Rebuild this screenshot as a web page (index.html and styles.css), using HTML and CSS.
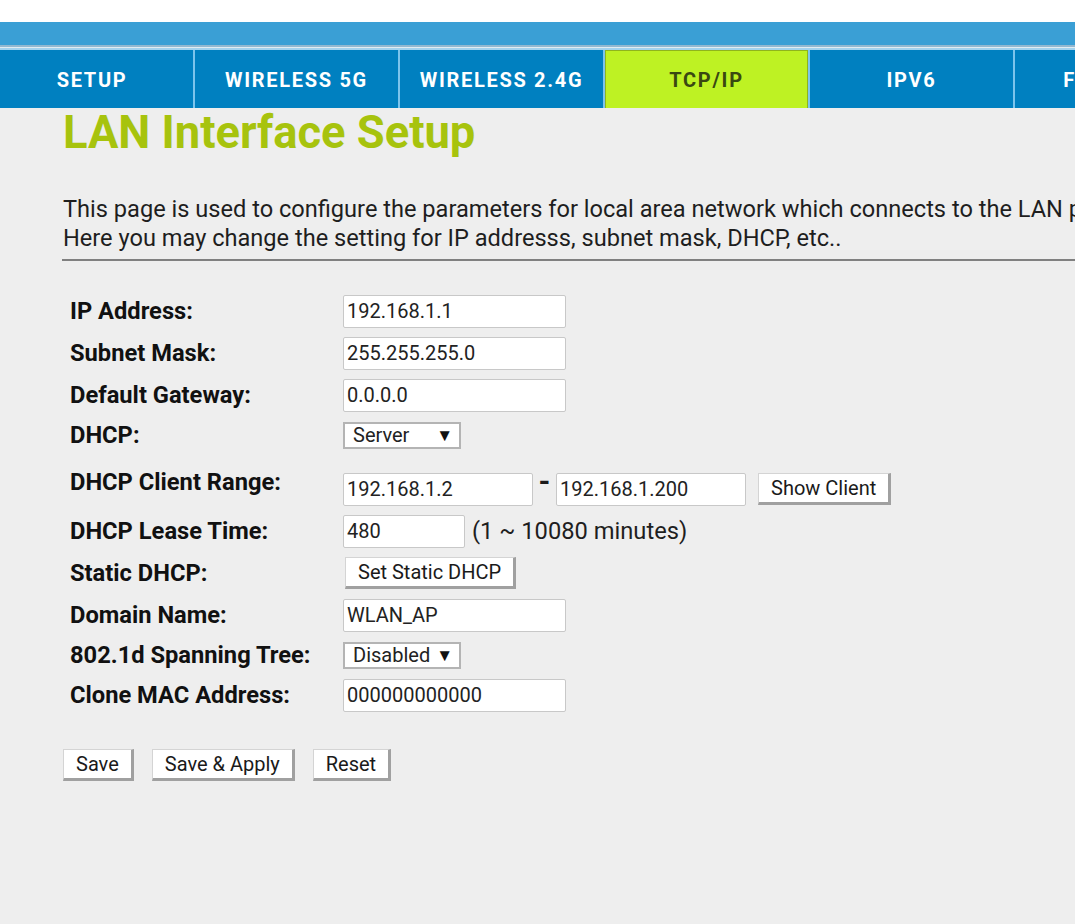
FILE: index.html
```html
<!DOCTYPE html>
<html lang="en">
<head>
    <meta charset="UTF-8">
    <meta name="viewport" content="width=device-width, initial-scale=1.0">
    <title>LAN Interface Setup</title>
    <link rel="stylesheet" href="styles.css">
</head>
<body>
    <!-- Header -->
    <div class="top-space"></div>
    <div class="top-bar"></div>
    <div class="top-stripe"></div>

    <!-- Main Menu -->
    <div class="menu">
        <div class="tab first">SETUP</div>
        <div class="tab">WIRELESS 5G</div>
        <div class="tab">WIRELESS 2.4G</div>
        <div class="tab active">TCP/IP</div>
        <div class="tab">IPV6</div>
        <div class="tab">FIREWALL</div>
    </div>

    <div class="content">
        <h1>LAN Interface Setup</h1>

        <p class="intro">This page is used to configure the parameters for local area network which connects to the LAN port of your Access Point.<br>Here you may change the setting for IP addresss, subnet mask, DHCP, etc..</p>
        <hr>

        <!-- LAN Settings -->
        <div class="form">
            <div class="row">
                <label>IP Address:</label>
                <input type="text" class="field" value="192.168.1.1">
            </div>
            <div class="row">
                <label>Subnet Mask:</label>
                <input type="text" class="field" value="255.255.255.0">
            </div>
            <div class="row">
                <label>Default Gateway:</label>
                <input type="text" class="field" value="0.0.0.0">
            </div>
            <div class="row short">
                <label>DHCP:</label>
                <span class="select">Server</span>
            </div>
            <div class="row range">
                <label>DHCP Client Range:</label>
                <div class="range-fields">
                    <input type="text" class="field mid" value="192.168.1.2">
                    <span class="dash">-</span>
                    <input type="text" class="field mid" value="192.168.1.200">
                    <button class="btn show-client">Show Client</button>
                </div>
            </div>
            <div class="row">
                <label>DHCP Lease Time:</label>
                <input type="text" class="field small" value="480">
                <span class="hint">(1 ~ 10080 minutes)</span>
            </div>
            <div class="row">
                <label>Static DHCP:</label>
                <button class="btn static">Set Static DHCP</button>
            </div>
            <div class="row">
                <label>Domain Name:</label>
                <input type="text" class="field" value="WLAN_AP">
            </div>
            <div class="row short">
                <label>802.1d Spanning Tree:</label>
                <span class="select">Disabled</span>
            </div>
            <div class="row">
                <label>Clone MAC Address:</label>
                <input type="text" class="field" value="000000000000">
            </div>
        </div>

        <!-- Button Group -->
        <div class="btn-group">
            <button class="btn">Save</button>
            <button class="btn">Save &amp; Apply</button>
            <button class="btn">Reset</button>
        </div>
    </div>
</body>
</html>
```

FILE: styles.css
```css
html, body {
    overflow: hidden;
}
body {
    font-family: Roboto, "Liberation Sans", Arial, sans-serif;
    margin: 0;
    background-color: #eeeeee;
    color: #1a1a1a;
    width: 1075px;
    height: 924px;
}
.top-space {
    height: 22px;
    background-color: #ffffff;
}
.top-bar {
    height: 23px;
    background-color: #3a9fd5;
}
.top-stripe {
    height: 5px;
    background: linear-gradient(#93b8d0 0, #93b8d0 2px, #e2edf2 2px, #e2edf2 3px, #a2d2ee 3px);
}
.menu {
    display: flex;
    height: 58px;
    background-color: #0080c0;
    overflow: hidden;
}
.tab {
    flex: 0 0 205px;
    border-left: 2px solid #7cc4ec;
    display: flex;
    justify-content: center;
    align-items: center;
    padding-top: 2px;
    box-sizing: border-box;
    color: #ffffff;
    font-size: 20px;
    font-weight: bold;
    letter-spacing: 1.7px;
    white-space: nowrap;
}
.tab.first {
    flex-basis: 193px;
    padding-right: 9px;
    border-left: none;
}
.tab.active {
    background-color: #bef223;
    color: #3a4812;
    box-shadow: inset 1px 1px 0 #8fb51c, inset -1px 0 0 #8fb51c;
}
.content {
    padding-left: 63px;
    width: 1200px;
}
.content h1 {
    margin: 1px 0 0;
    font-size: 45.3px;
    line-height: 48px;
    color: #a7c30d;
}
.intro {
    margin: 38px 0 0;
    font-size: 23.6px;
    line-height: 29px;
    color: #1e1e1e;
    white-space: nowrap;
}
hr {
    margin: 6px 0 0 -1px;
    border: none;
    height: 2px;
    background-color: #808080;
}
.form {
    margin-top: 29px;
    display: flex;
    flex-direction: column;
}
.row {
    display: flex;
    align-items: center;
    height: 42px;
}
.row.short {
    height: 38px;
}
.row.range {
    height: 56px;
}
.row label {
    flex: 0 0 280px;
    box-sizing: border-box;
    padding-left: 7px;
    font-size: 23.7px;
    font-weight: bold;
    color: #111;
}
.field {
    box-sizing: border-box;
    width: 223px;
    height: 33px;
    padding: 0 3px;
    border: 1px solid #c8c8c8;
    border-radius: 2px;
    background-color: #ffffff;
    font-family: inherit;
    font-size: 20px;
    color: #222;
}
.field.mid {
    width: 190px;
}
.field.small {
    width: 122px;
}
.range-fields {
    display: flex;
    align-items: center;
    margin-top: 14px;
}
.dash {
    align-self: flex-start;
    width: 23px;
    text-align: center;
    font-size: 30px;
    font-weight: bold;
    line-height: 16px;
}
.hint {
    margin-left: 7px;
    font-size: 23.7px;
    color: #1e1e1e;
}
.select {
    position: relative;
    box-sizing: border-box;
    width: 118px;
    height: 27px;
    padding-left: 8px;
    border: 2px solid #b4b4b4;
    background-color: #ffffff;
    font-size: 20px;
    line-height: 23px;
    color: #222;
}
.select::after {
    content: "\25BC";
    position: absolute;
    right: 6px;
    top: 0;
    font-size: 17px;
    color: #111;
}
.btn {
    box-sizing: border-box;
    height: 32px;
    padding: 0 12px;
    background-color: #ffffff;
    border-top: 1px solid #d4d4d4;
    border-left: 1px solid #d4d4d4;
    border-right: 3px solid #a0a0a0;
    border-bottom: 3px solid #a0a0a0;
    border-radius: 0;
    font-family: inherit;
    font-size: 20px;
    color: #1a1a1a;
    cursor: pointer;
}
.show-client {
    margin-left: 12px;
}
.static {
    margin-left: 2px;
}
.btn-group {
    display: flex;
    gap: 18px;
    margin-top: 33px;
}
```
